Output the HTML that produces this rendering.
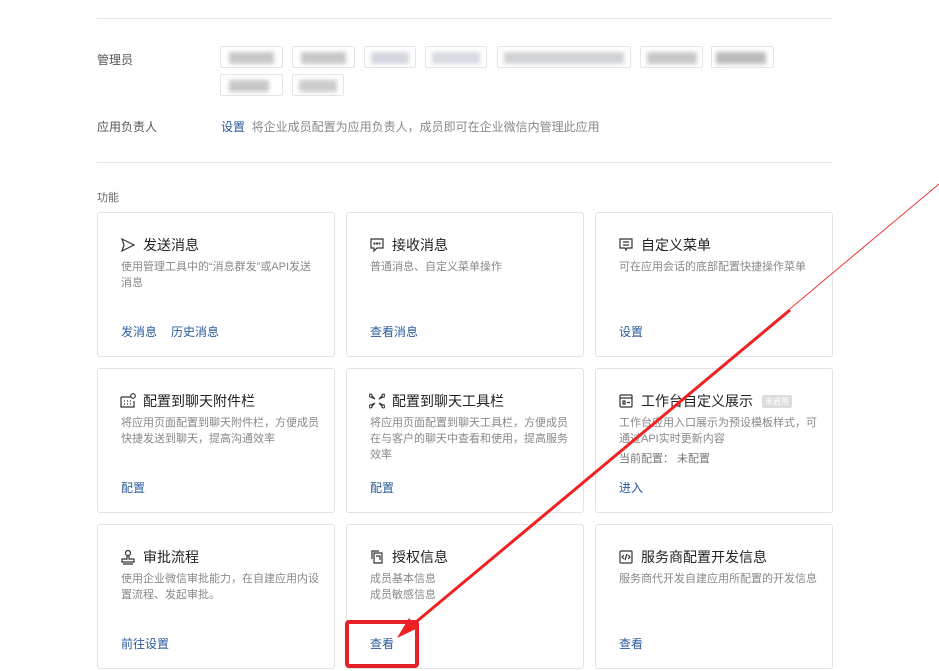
<!DOCTYPE html>
<html><head><meta charset="utf-8"><style>
*{margin:0;padding:0;box-sizing:border-box}
body{width:939px;height:671px;background:#fff;position:relative;overflow:hidden;font-family:"Liberation Sans","Noto Sans CJK SC",sans-serif;color:#333}
.hr{position:absolute;left:97px;width:735px;height:1px;background:#e4e6e9}
.lbl{position:absolute;font-size:12px;color:#555}
.tag{position:absolute;height:22px;border:1px solid #e3e5e8;border-radius:2px;background:#fff;overflow:hidden}
.tag i{position:absolute;top:5px;height:12px;background:#c8c8c8;filter:blur(2px)}
.card{position:absolute;width:238px;height:145px;border:1px solid #e1e3e6;border-radius:3px;background:#fff}
.card .t{position:absolute;left:22px;top:22px;font-size:14px;color:#222;display:flex;align-items:center;gap:7px}
.card .t svg{width:16px;height:16px}
.card .d{position:absolute;left:23px;top:46px;width:200px;font-size:11px;line-height:16px;color:#888}
.card .l{position:absolute;left:23px;top:110px;font-size:12px;color:#2a5b9a}
.card .l span{margin-right:14px}
.badge{font-size:8px;color:#fff;background:#ddd;padding:1px 3px;border-radius:2px;margin-left:2px}
</style></head><body>
<div class="hr" style="top:18px"></div>
<div class="lbl" style="left:97px;top:51px">管理员</div>
<div class="tag" style="left:220px;top:46px;width:63px"><i style="left:8px;width:45px"></i></div>
<div class="tag" style="left:292px;top:46px;width:63px"><i style="left:8px;width:45px"></i></div>
<div class="tag" style="left:364px;top:46px;width:52px"><i style="left:6px;width:38px;background:#d3d8de"></i></div>
<div class="tag" style="left:425px;top:46px;width:62px"><i style="left:6px;width:48px;background:#d6dbe0"></i></div>
<div class="tag" style="left:497px;top:46px;width:134px"><i style="left:6px;width:120px;background:#d0d2d4"></i></div>
<div class="tag" style="left:640px;top:46px;width:63px"><i style="left:6px;width:50px"></i></div>
<div class="tag" style="left:711px;top:46px;width:63px"><i style="left:4px;width:50px;background:#bbb"></i></div>
<div class="tag" style="left:220px;top:74px;width:63px"><i style="left:8px;width:40px"></i></div>
<div class="tag" style="left:292px;top:74px;width:52px"><i style="left:6px;width:38px;background:#ccc"></i></div>
<div class="lbl" style="left:97px;top:118px">应用负责人</div>
<div style="position:absolute;left:221px;top:118px;font-size:12px;color:#888"><span style="color:#2a5b9a">设置</span>&nbsp; 将企业成员配置为应用负责人，成员即可在企业微信内管理此应用</div>
<div class="hr" style="top:162px"></div>
<div class="lbl" style="left:97px;top:189px;font-size:11px;color:#666">功能</div>

<div class="card" style="left:97px;top:212px"><div class="t"><svg viewBox="0 0 16 16" fill="none" stroke="#333" stroke-width="1.2"><path d="M2 2l12 6-12 6 2-6z"/></svg>发送消息</div><div class="d">使用管理工具中的“消息群发”或API发送消息</div><div class="l"><span>发消息</span><span>历史消息</span></div></div>
<div class="card" style="left:346px;top:212px"><div class="t"><svg viewBox="0 0 16 16" fill="none" stroke="#333" stroke-width="1.2"><path d="M2 2h12v9H8l-3 3v-3H2z"/><circle cx="5.5" cy="6.5" r=".5"/><circle cx="8" cy="6.5" r=".5"/><circle cx="10.5" cy="6.5" r=".5"/></svg>接收消息</div><div class="d">普通消息、自定义菜单操作</div><div class="l"><span>查看消息</span></div></div>
<div class="card" style="left:595px;top:212px"><div class="t"><svg viewBox="0 0 16 16" fill="none" stroke="#333" stroke-width="1.2"><path d="M2 2h12v9H9l-1 2-1-2H2z M5 5h6M5 8h6"/></svg>自定义菜单</div><div class="d">可在应用会话的底部配置快捷操作菜单</div><div class="l"><span>设置</span></div></div>

<div class="card" style="left:97px;top:368px"><div class="t"><svg viewBox="0 0 16 16" fill="none" stroke="#333" stroke-width="1.2"><path d="M1 4h10M1 4v10h13V8"/><circle cx="13" cy="3" r="2.3"/><path d="M4 8h1M7 8h1M10 8h1M4 11h1M7 11h1M10 11h1"/></svg>配置到聊天附件栏</div><div class="d">将应用页面配置到聊天附件栏，方便成员快捷发送到聊天，提高沟通效率</div><div class="l"><span>配置</span></div></div>
<div class="card" style="left:346px;top:368px"><div class="t"><svg viewBox="0 0 16 16" fill="none" stroke="#333" stroke-width="1.2"><path d="M6 6L3 3a1.5 1.5 0 10-1 1zM10 6l3-3a1.5 1.5 0 11 1 1zM6 10l-3 3a1.5 1.5 0 11-1-1zM10 10l3 3a1.5 1.5 0 101-1z"/></svg>配置到聊天工具栏</div><div class="d">将应用页面配置到聊天工具栏，方便成员在与客户的聊天中查看和使用，提高服务效率</div><div class="l"><span>配置</span></div></div>
<div class="card" style="left:595px;top:368px"><div class="t"><svg viewBox="0 0 16 16" fill="none" stroke="#333" stroke-width="1.2"><rect x="2" y="2" width="12" height="12" rx="1"/><path d="M2 5h12M5 8h2v3H5zM9 9.5h3"/></svg>工作台自定义展示<span class="badge">未启用</span></div><div class="d">工作台应用入口展示为预设模板样式，可通过API实时更新内容<br><span style="line-height:24px;color:#777">当前配置： 未配置</span></div><div class="l"><span>进入</span></div></div>

<div class="card" style="left:97px;top:524px"><div class="t"><svg viewBox="0 0 16 16" fill="none" stroke="#333" stroke-width="1.2"><circle cx="8" cy="4" r="2.5"/><path d="M7 7v3H2v3h12v-3H9V7M3 15h10"/></svg>审批流程</div><div class="d">使用企业微信审批能力，在自建应用内设置流程、发起审批。</div><div class="l"><span>前往设置</span></div></div>
<div class="card" style="left:346px;top:524px"><div class="t"><svg viewBox="0 0 16 16" fill="none" stroke="#333" stroke-width="1.2"><path d="M10 2H3v8M5 4h8v10H5zM7 7h4v4"/></svg>授权信息</div><div class="d">成员基本信息<br>成员敏感信息</div><div class="l"><span>查看</span></div></div>
<div class="card" style="left:595px;top:524px"><div class="t"><svg viewBox="0 0 16 16" fill="none" stroke="#333" stroke-width="1.2"><rect x="2" y="2" width="12" height="12" rx="1"/><path d="M6 6l-2 2 2 2M10 6l2 2-2 2M9 5l-2 6"/></svg>服务商配置开发信息</div><div class="d">服务商代开发自建应用所配置的开发信息</div><div class="l"><span>查看</span></div></div>

<svg style="position:absolute;left:0;top:0" width="939" height="671">
<line x1="939" y1="184" x2="404" y2="632" stroke="#ee3333" stroke-width="1"/>
<line x1="790" y1="310" x2="404" y2="632" stroke="#ee2222" stroke-width="3"/>
<polygon points="397,638 409,618 418,628" fill="#ee2222"/>
<rect x="347" y="622" width="70" height="44" rx="2" fill="none" stroke="#e8202a" stroke-width="4"/>
</svg>
</body></html>
